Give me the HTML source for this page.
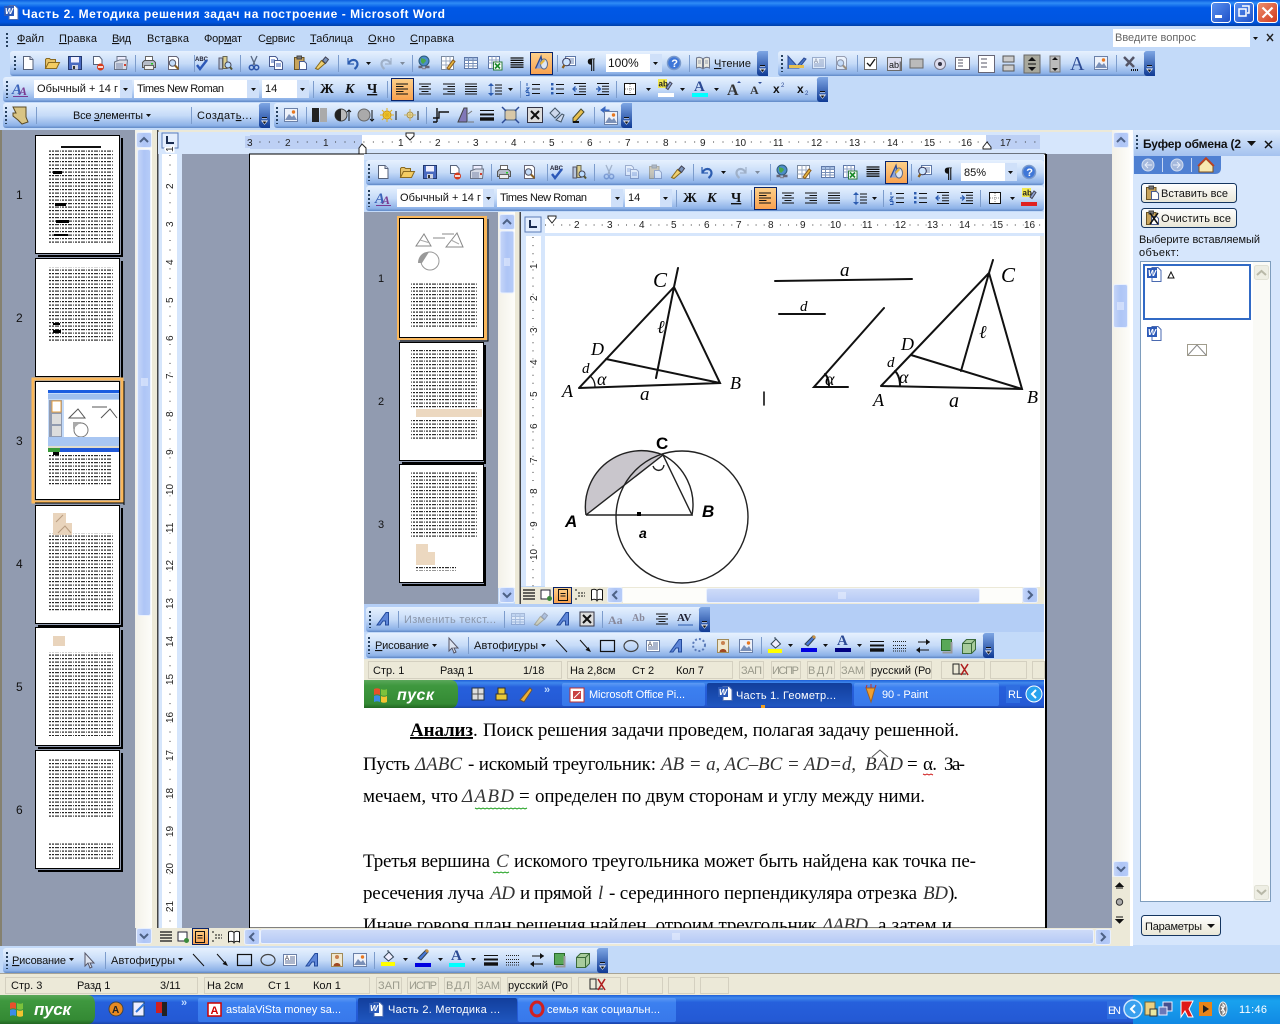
<!DOCTYPE html>
<html lang="ru"><head><meta charset="utf-8"><title>Часть 2. Методика решения задач на построение - Microsoft Word</title>
<style>
html,body{margin:0;padding:0;background:#c3daf9;overflow:hidden}
svg{display:block;position:absolute;left:0;top:0}
text{font-family:"Liberation Sans","DejaVu Sans",sans-serif;font-size:11px;fill:#111}
.t{font-family:"Liberation Serif","DejaVu Serif",serif;font-size:19px;fill:#000}
.i{font-family:"Liberation Serif",serif;font-size:19px;font-style:italic;fill:#333}
.r{font-size:10px;fill:#222}
.w{fill:#fff}.g{fill:#9a9a8c}.b{font-weight:bold}
.h{font-family:"Liberation Serif",serif;font-style:italic;font-size:18px;fill:#000}
.d{font-family:"Liberation Sans",sans-serif;font-weight:bold;font-size:17px;fill:#000}
</style></head><body>
<svg width="1280" height="1024" viewBox="0 0 1280 1024" xmlns="http://www.w3.org/2000/svg">
<defs>
<linearGradient id="title" x1="0" y1="0" x2="0" y2="1"><stop offset="0" stop-color="#0a5de0"/><stop offset=".12" stop-color="#2f8cf5"/><stop offset=".3" stop-color="#0058e6"/><stop offset=".85" stop-color="#0055e0"/><stop offset="1" stop-color="#0040a8"/></linearGradient>
<linearGradient id="tb" x1="0" y1="0" x2="0" y2="1"><stop offset="0" stop-color="#e6f1fe"/><stop offset=".5" stop-color="#c6dbf8"/><stop offset=".9" stop-color="#8db2e8"/><stop offset="1" stop-color="#5f87c5"/></linearGradient>
<linearGradient id="chev" x1="0" y1="0" x2="0" y2="1"><stop offset="0" stop-color="#7ea6e4"/><stop offset="1" stop-color="#0f3a94"/></linearGradient>
<linearGradient id="sel" x1="0" y1="0" x2="0" y2="1"><stop offset="0" stop-color="#fdd08a"/><stop offset="1" stop-color="#f8a04e"/></linearGradient>
<linearGradient id="tbar" x1="0" y1="0" x2="0" y2="1"><stop offset="0" stop-color="#1f5fd8"/><stop offset=".1" stop-color="#3f88ec"/><stop offset=".25" stop-color="#2660dc"/><stop offset=".9" stop-color="#2459d4"/><stop offset="1" stop-color="#1a44a8"/></linearGradient>
<linearGradient id="tbtn" x1="0" y1="0" x2="0" y2="1"><stop offset="0" stop-color="#5c9af5"/><stop offset=".2" stop-color="#3c80f0"/><stop offset="1" stop-color="#3878ea"/></linearGradient>
<linearGradient id="tact" x1="0" y1="0" x2="0" y2="1"><stop offset="0" stop-color="#123e9c"/><stop offset="1" stop-color="#1f56bf"/></linearGradient>
<linearGradient id="tray" x1="0" y1="0" x2="0" y2="1"><stop offset="0" stop-color="#0f7fdc"/><stop offset=".2" stop-color="#19a2ee"/><stop offset="1" stop-color="#1189e4"/></linearGradient>
<linearGradient id="start" x1="0" y1="0" x2="0" y2="1"><stop offset="0" stop-color="#5aa75a"/><stop offset=".2" stop-color="#3f983f"/><stop offset=".85" stop-color="#348a34"/><stop offset="1" stop-color="#226622"/></linearGradient>
<linearGradient id="sb" x1="0" y1="0" x2="1" y2="0"><stop offset="0" stop-color="#c6d6f8"/><stop offset=".5" stop-color="#aec5f6"/><stop offset="1" stop-color="#b6ccf8"/></linearGradient>
<linearGradient id="sbh" x1="0" y1="0" x2="0" y2="1"><stop offset="0" stop-color="#cfdcf8"/><stop offset="1" stop-color="#b4c9f6"/></linearGradient>
<linearGradient id="track" x1="0" y1="0" x2="1" y2="0"><stop offset="0" stop-color="#f3f1e8"/><stop offset="1" stop-color="#fdfdfa"/></linearGradient>
<linearGradient id="pane" x1="0" y1="0" x2="0" y2="1"><stop offset="0" stop-color="#dfecfd"/><stop offset="1" stop-color="#a4c2ef"/></linearGradient>
<linearGradient id="btn" x1="0" y1="0" x2="0" y2="1"><stop offset="0" stop-color="#fff"/><stop offset="1" stop-color="#e8e6d6"/></linearGradient>
<linearGradient id="wb" x1="0" y1="0" x2="1" y2="1"><stop offset="0" stop-color="#5b92f0"/><stop offset="1" stop-color="#1d50c8"/></linearGradient>
<linearGradient id="wr" x1="0" y1="0" x2="1" y2="1"><stop offset="0" stop-color="#ee9170"/><stop offset="1" stop-color="#d0381c"/></linearGradient>
<pattern id="txt" width="13" height="3.5" patternUnits="userSpaceOnUse"><rect width="2" height="1.200" fill="#222"/><rect x="3" width="4" height="1.200" fill="#333"/><rect x="8" width="1" height="1.200" fill="#444"/><rect x="10" width="2" height="1.200" fill="#222"/></pattern>

<g id="new"><path d="M3.5 1.5h6.5l3 3v10h-9.500z" fill="#fff" stroke="#56627a"/><path d="M10 1.500v3h3" fill="#dde" stroke="#56627a"/></g>
<g id="open"><path d="M1.500 13.500v-9l1-1h3l1 1h5v3" fill="#e8c468" stroke="#8a6a20"/><path d="M1.500 13.500l3-6h11l-3 6z" fill="#f4cc62" stroke="#8a6a20"/></g>
<g id="save"><rect x="1.500" y="1.500" width="13" height="13" fill="#4a6ac0" stroke="#23386f"/><rect x="4" y="2" width="8" height="5.500" fill="#f0f0ff"/><rect x="5" y="10" width="6" height="4.500" fill="#d0d4e4"/><rect x="6" y="11" width="2" height="3" fill="#333"/></g>
<g id="perm"><path d="M3.500 1.500h6l2.500 3v5h-8.500z" fill="#fff" stroke="#56627a"/><circle cx="10.500" cy="12" r="3.500" fill="#d43a1c"/><rect x="8" y="11.200" width="5" height="1.600" fill="#fff"/></g>
<g id="mail"><path d="M4 1.500h9v6H4z" fill="#eef" stroke="#6a7488"/><path d="M1.500 7l5-2h8l-1 9.500H1.500z" fill="#d8dde8" stroke="#6a7488"/><path d="M3 9h7M3 11h7M3 13h7" stroke="#7a88a8"/><rect x="11" y="9" width="2" height="2" fill="#d04030"/></g>
<g id="print"><path d="M4.500 1.500h7v5h-7z" fill="#fff" stroke="#666"/><path d="M1.500 7.500l2-2h9l2 2v5h-13z" fill="#b6bcc8" stroke="#555"/><path d="M3.500 10.500h9v4h-9z" fill="#eee" stroke="#666"/><rect x="10" y="8" width="2" height="1.500" fill="#2c2"/></g>
<g id="prev"><path d="M3.500 1.500h8l2 2v11h-10z" fill="#fff" stroke="#667"/><circle cx="7.500" cy="8" r="3.200" fill="#c4dcf8" stroke="#556"/><path d="M10 10.500l3.500 3.500" stroke="#8a6020" stroke-width="2"/></g>
<g id="spell"><text x="1" y="6" style="font-size:6px;font-weight:bold;fill:#223">ABC</text><path d="M3 10l3 4 7-9" fill="none" stroke="#2c58b8" stroke-width="2.400"/></g>
<g id="res"><rect x="2" y="3" width="3.500" height="11" fill="#b6c4dc" stroke="#556"/><rect x="6" y="1.500" width="4" height="12" fill="#dccf90" stroke="#665"/><circle cx="11" cy="10" r="3" fill="#bcdcff" stroke="#445"/><path d="M13 12l2 2.500" stroke="#553" stroke-width="2"/></g>
<g id="cut"><path d="M5 1l4 9M11 1L7 10" stroke="#5a6a84" stroke-width="1.300" fill="none"/><circle cx="5.500" cy="12.500" r="2.200" fill="none" stroke="#2c54a8" stroke-width="1.500"/><circle cx="10.500" cy="12.500" r="2.200" fill="none" stroke="#2c54a8" stroke-width="1.500"/></g>
<g id="copy"><path d="M1.500 1.500h6l2 2v8h-8z" fill="#fff" stroke="#4a5c90"/><path d="M6.500 5.500h6l2 2v7h-8z" fill="#fff" stroke="#4a5c90"/><path d="M8 9h5M8 11h5M3 5h4M3 7h3" stroke="#3f63b8"/></g>
<g id="paste"><rect x="2.500" y="2.500" width="9.500" height="12" fill="#c8a45c" stroke="#6a5424"/><rect x="5" y="1" width="4.500" height="3" fill="#777" stroke="#444"/><path d="M7.500 6.500h5l2 2v6h-7z" fill="#fff" stroke="#4a5c90"/></g>
<g id="brush"><path d="M1.500 13.500l6-8 3.500 3-7 6z" fill="#f0d070" stroke="#86691c"/><path d="M8.500 5.500l3-3.500 3 2.500-3 4z" fill="#7a92b8" stroke="#445"/></g>
<g id="undo"><path d="M3 3v6h6" fill="none" stroke="#2c5cb0" stroke-width="1.200"/><path d="M3.500 8.500c2-5 9-4.500 9 .5 0 2-1 3.500-3 5" fill="none" stroke="#2c5cb0" stroke-width="2.200"/></g>
<g id="redo"><path d="M13 3v6H7" fill="none" stroke="#9fb0c8" stroke-width="1.200"/><path d="M12.500 8.500c-2-5-9-4.500-9 .5 0 2 1 3.500 3 5" fill="none" stroke="#9fb0c8" stroke-width="2.200"/></g>
<g id="link"><circle cx="8" cy="6" r="5" fill="#4c8cc8" stroke="#2c5a7c"/><path d="M5 3c2 1 4 0 5 3l-3 3-2-2z" fill="#4aa84a"/><path d="M2.500 12h4M9 12h4.500" stroke="#667" stroke-width="2.500"/><path d="M6 13.500h4" stroke="#889" stroke-width="1.500"/></g>
<g id="tbl"><rect x="1.500" y="1.500" width="12" height="13" fill="#fff" stroke="#7a8aa0"/><path d="M1.500 6h12M1.500 10h12M6 1.500v13M10 1.500v13" stroke="#9aa8c0"/><path d="M7 13l6-8 2 1.500-6 8z" fill="#e8b840" stroke="#8a5a1c"/></g>
<g id="grid"><rect x="1.500" y="2.500" width="13" height="11" fill="#fff" stroke="#5e78a8"/><rect x="2" y="3" width="12" height="2" fill="#a8c0e4"/><path d="M1.500 5.500h13M1.500 8.500h13M1.500 11h13M5.500 2.500v11M10 2.500v11" stroke="#7890b8"/></g>
<g id="xl"><rect x="1.500" y="1.500" width="11" height="12" fill="#fff" stroke="#5e78a8"/><path d="M1.500 5h11M1.500 8h11M5 1.500v12M9 1.500v12" stroke="#8ea2c4"/><rect x="6.500" y="7" width="8.500" height="8" fill="#fff" stroke="#2a7a3a"/><path d="M8 8.500l5 5M13 8.500l-5 5" stroke="#1a8a2a" stroke-width="1.700"/></g>
<g id="cols"><path d="M1.500 3h5.500M9 3h5.500M1.500 5.300h5.500M9 5.300h5.500M1.500 7.600h5.500M9 7.600h5.500M1.500 9.900h5.500M9 9.900h5.500M1.500 12.200h5.500M9 12.200h5.500" stroke="#111" stroke-width="1.300"/><path d="M7 3h2M7 5.300h2M7 7.600h2M7 9.900h2M7 12.200h2" stroke="#111" stroke-width="1.300"/></g>
<g id="draw"><path d="M2.500 13.500L8 1.500l2.500 12" fill="#8ca4d8" stroke="#2c4a94" stroke-width="1.300"/><ellipse cx="11" cy="9" rx="3.500" ry="5" fill="#dde6f4" stroke="#5c6a8a"/><path d="M7 8l4-4 1 2-4 4z" fill="#e8b840"/></g>
<g id="dmap"><rect x="4.500" y="1.500" width="10" height="9" fill="#fff" stroke="#5e78a8"/><path d="M6 4h7M6 6h7M6 8h7" stroke="#6a84b4"/><circle cx="5.500" cy="7" r="3.800" fill="#cce4ff" stroke="#335"/><path d="M3.500 10l-2 3" stroke="#8a6020" stroke-width="2.200"/></g>
<g id="help"><circle cx="8" cy="8" r="6.500" fill="#3f77d8" stroke="#7a9acc" stroke-width="1.500"/><text x="5.200" y="12" style="font-size:11px;font-weight:bold;fill:#fff">?</text></g>
<g id="book"><path d="M1.500 3c2-1 4-1 6 .5v10c-2-1.500-4-1.500-6-.5zM14.500 3c-2-1-4-1-6 .5v10c2-1.500 4-1.500 6-.5z" fill="#e8e8e0" stroke="#70788c"/><path d="M3 6h3M3 8h3M10 6h3M10 8h3" stroke="#98a0b0"/></g>
<g id="sty"><text x="-1" y="13" style="font-family:'Liberation Serif',serif;font-size:15px;font-weight:bold;font-style:italic;fill:#3a62b8">A</text><text x="6" y="14" style="font-family:'Liberation Serif',serif;font-size:12px;font-weight:bold;font-style:italic;fill:#7a3a90">A</text><path d="M0 15.500h15" stroke="#7a3a90"/></g>
<g id="al"><path d="M2 3h12M2 5.500h7.500M2 8h12M2 10.500h7.500M2 13h12" stroke="#111"/></g>
<g id="ac"><path d="M2 3h12M4.500 5.500h7M2 8h12M4.500 10.500h7M2 13h12" stroke="#111"/></g>
<g id="ar"><path d="M2 3h12M6.500 5.500h7.500M2 8h12M6.500 10.500h7.500M2 13h12" stroke="#111"/></g>
<g id="aj"><path d="M2 3h12M2 5.500h12M2 8h12M2 10.500h12M2 13h12" stroke="#111"/></g>
<g id="ls"><path d="M8 4h7M8 7h7M8 10h7M8 13h7" stroke="#111"/><path d="M4 2l-3 3h6zM4 15l-3-3h6z" fill="#2c5cb0"/><path d="M4 4v9" stroke="#2c5cb0"/></g>
<g id="num"><path d="M7 3.500h8M7 8h8M7 12.500h8" stroke="#111"/><path d="M2 2v3M1 7h3L1 10h3M1 11.500h3v3H1" stroke="#2c5cb0" fill="none"/></g>
<g id="bul"><path d="M7 3.500h8M7 8h8M7 12.500h8" stroke="#111"/><rect x="2" y="2" width="2.500" height="2.500" fill="#2c5cb0"/><rect x="2" y="6.500" width="2.500" height="2.500" fill="#2c5cb0"/><rect x="2" y="11" width="2.500" height="2.500" fill="#2c5cb0"/></g>
<g id="out"><path d="M2 2.500h12M7 5.300h7M7 8h7M7 10.700h7M2 13.500h12" stroke="#111"/><path d="M5 8H1M3.500 5.500L1 8l2.500 2.500" stroke="#2c5cb0" fill="none" stroke-width="1.300"/></g>
<g id="ind"><path d="M2 2.500h12M7 5.300h7M7 8h7M7 10.700h7M2 13.500h12" stroke="#111"/><path d="M1 8h4M3 5.500L5.500 8 3 10.500" stroke="#2c5cb0" fill="none" stroke-width="1.300"/></g>
<g id="bord"><rect x="2.500" y="2.500" width="11" height="11" fill="#fff" stroke="#111"/><path d="M8 3v10M3 8h10" stroke="#888" stroke-dasharray="1 1"/></g>
<g id="hl"><rect x="1" y="0" width="9" height="9" fill="#f2e850"/><text x="1.500" y="7.500" style="font-size:8px;font-weight:bold;fill:#222">ab</text><path d="M9 9l4-6 2 1.500-4 6z" fill="#8ca4d8" stroke="#445"/></g>
<g id="fc"><text x="2" y="12" style="font-family:'Liberation Serif',serif;font-size:15px;font-weight:bold;fill:#2c4a94">A</text></g>
<g id="arr"><path d="M0 0h5L2.500 3z" fill="#111"/></g>
<g id="cv"><path d="M0 4a3 3 0 0 1 3-4h8v25H3a3 3 0 0 1-3-3z" fill="url(#chev)"/><path d="M3 15h5M3 18h5L5.500 21z" stroke="#fff" fill="#fff"/><path d="M3 14.500h5" stroke="#111"/><path d="M3.500 18.500h4L5.500 21z" fill="#111" stroke="none"/></g>
<g id="line"><path d="M3 2l11 12" stroke="#111"/></g>
<g id="larr"><path d="M3 2l8 9" stroke="#111"/><path d="M14 14l-5.500-2 3-3z" fill="#111"/></g>
<g id="rec"><rect x=".5" y="2.500" width="14" height="11" fill="none" stroke="#111" stroke-width="1.200"/></g>
<g id="ell"><ellipse cx="8" cy="8" rx="7" ry="5.500" fill="none" stroke="#444" stroke-width="1.200"/></g>
<g id="tx"><rect x="1.500" y="2.500" width="13" height="11" fill="#fff" stroke="#6a80a8"/><text x="3" y="8" style="font-size:6px;fill:#223">A</text><path d="M8 5h5M8 7h5M3 9h10M3 11h10" stroke="#5a6e98"/></g>
<g id="wa"><path d="M1 14L10 1.500h2.500V14h-3V10H7l-3 4z" fill="#5e86d8" stroke="#234a9c"/></g>
<g id="clip"><rect x="2.500" y="1.500" width="11" height="13" fill="#f0e8d0" stroke="#a08a58"/><circle cx="8" cy="5" r="2" fill="#c88050"/><path d="M4.500 14c0-4 7-4 7 0z" fill="#a04820"/></g>
<g id="pic"><rect x="1.500" y="1.500" width="13" height="13" fill="#eef2fa" stroke="#6a80a8"/><path d="M2 13l4-6 3 3 2-2 3 5z" fill="#7a90b8"/><circle cx="10.500" cy="5" r="1.700" fill="#e87820"/></g>
<g id="fill"><path d="M3 7l5-5 4.500 5-5 4z" fill="#eef" stroke="#345"/><path d="M7 2v-2" stroke="#345"/><rect x="0" y="12" width="14" height="4"/></g>
<g id="lc"><path d="M3 9l8-8 2 2-7 8z" fill="#4878d8" stroke="#345"/><path d="M10 2l2-2 2 2-2 2z" fill="#c89040"/></g>
<g id="lw"><path d="M1 3.500h14" stroke="#111"/><path d="M1 7.500h14" stroke="#111" stroke-width="2"/><path d="M1 12h14" stroke="#111" stroke-width="3.400"/></g>
<g id="das"><path d="M1 3.500h14M1 7.500h14M1 10.500h14M1 13h14" stroke="#222" stroke-dasharray="1 1"/></g>
<g id="ars"><path d="M3 4h12M2 12h12" stroke="#111"/><path d="M1 12l4-3v6zM15 4l-4-3v6zM1 8h14" fill="#111"/></g>
<g id="sha"><rect x="3.500" y="1.500" width="10" height="11" fill="#58a858" stroke="#2a6a2a"/><path d="M13.500 4v10.500h-9" stroke="#999" stroke-width="2" fill="none"/></g>
<g id="d3"><path d="M1.500 5.500l4-4h9v10l-4 4h-9z" fill="#a8cc9c" stroke="#3a6a3a"/><path d="M1.500 5.500h9v10M10.500 5.500l4-4" fill="none" stroke="#3a6a3a"/></g>
<g id="uarr"><rect x=".5" y=".5" width="15" height="15" rx="2" fill="url(#sb)" stroke="#e8f0fe"/><path d="M4 10l4-4 4 4" fill="none" stroke="#4d6185" stroke-width="2"/></g>
<g id="darr"><rect x=".5" y=".5" width="15" height="15" rx="2" fill="url(#sb)" stroke="#e8f0fe"/><path d="M4 6l4 4 4-4" fill="none" stroke="#4d6185" stroke-width="2"/></g>
<g id="larr2"><rect x=".5" y=".5" width="15" height="15" rx="2" fill="url(#sb)" stroke="#e8f0fe"/><path d="M10 4L6 8l4 4" fill="none" stroke="#4d6185" stroke-width="2"/></g>
<g id="rarr2"><rect x=".5" y=".5" width="15" height="15" rx="2" fill="url(#sb)" stroke="#e8f0fe"/><path d="M6 4l4 4-4 4" fill="none" stroke="#4d6185" stroke-width="2"/></g>
<g id="wd"><path d="M6 1.500h6l3 3v11H6z" fill="#fff" stroke="#4a6ab0"/><rect x="1" y="2" width="10" height="10" fill="#2c5ab8"/><text x="2" y="10" style="font-size:8.500px;font-weight:bold;font-style:italic;fill:#fff">W</text></g>
<g id="flag"><path d="M1 3c2-1 4-1 6 0v6c-2-1-4-1-6 0z" fill="#e8502c"/><path d="M8 3c2 1 4 1 6 0v6c-2 1-4 1-6 0z" fill="#7cc23c"/><path d="M1 10c2-1 4-1 6 0v6c-2-1-4-1-6 0z" fill="#3c8ce8"/><path d="M8 10c2 1 4 1 6 0v6c-2 1-4 1-6 0z" fill="#f4c430"/></g>
<g id="vn"><path d="M2 3h12M2 6h12M2 9h12M2 12h12" stroke="#111" stroke-width="1.200"/></g>
<g id="vw"><rect x="3" y="3" width="9" height="9" fill="#fff" stroke="#223"/><circle cx="11.500" cy="11.500" r="2.500" fill="#3a8a3a"/></g>
<g id="vp"><rect x="3.500" y="2.500" width="9" height="11" fill="none" stroke="#111"/><path d="M5.500 6.500h5M5.500 9h5" stroke="#111"/></g>
<g id="vo"><path d="M3 3h3M6 6h7M6 9h7M3 12h3" stroke="#111" stroke-dasharray="2 1"/></g>
<g id="vr"><path d="M2.500 3c2-1 4-1 5.500 .5v10c-1.500-1.500-3.500-1.500-5.500-.5zM13.500 3c-2-1-4-1-5.500 .5v10c1.500-1.500 3.500-1.500 5.500-.5z" fill="#fff" stroke="#111"/></g>
</defs>

<!-- base -->
<rect width="1280" height="1024" fill="#c3daf9"/>
<!-- title bar -->
<rect width="1280" height="26" fill="url(#title)"/>
<use href="#wd" x="3" y="4"/>
<text x="22" y="18" class="w b" style="font-size:12px" textLength="423" lengthAdjust="spacing">Часть 2. Методика решения задач на построение - Microsoft Word</text>
<rect x="1211.500" y="2.500" width="19" height="20" rx="3" fill="url(#wb)" stroke="#fff"/><rect x="1215" y="15" width="7" height="3" fill="#fff"/>
<rect x="1234.500" y="2.500" width="19" height="20" rx="3" fill="url(#wb)" stroke="#fff"/><path d="M1242 6h7v7h-2M1239 9h7v7h-7z" fill="none" stroke="#fff" stroke-width="1.500"/>
<rect x="1257.500" y="2.500" width="20" height="20" rx="3" fill="url(#wr)" stroke="#fff"/><path d="M1262.500 7.500l10 10M1272.500 7.500l-10 10" stroke="#fff" stroke-width="2.200"/>

<!-- menu bar -->
<path d="M7 33v15" stroke="#27415e" stroke-width="2" stroke-dasharray="2 2"/>
<g>
<text x="17" y="42" textLength="27"><tspan text-decoration="underline">Ф</tspan>айл</text>
<text x="59" y="42" textLength="38"><tspan text-decoration="underline">П</tspan>равка</text>
<text x="112" y="42" textLength="19"><tspan text-decoration="underline">В</tspan>ид</text>
<text x="147" y="42" textLength="42">Вст<tspan text-decoration="underline">а</tspan>вка</text>
<text x="204" y="42" textLength="38">Фор<tspan text-decoration="underline">м</tspan>ат</text>
<text x="258" y="42" textLength="37">С<tspan text-decoration="underline">е</tspan>рвис</text>
<text x="310" y="42" textLength="43"><tspan text-decoration="underline">Т</tspan>аблица</text>
<text x="368" y="42" textLength="27"><tspan text-decoration="underline">О</tspan>кно</text>
<text x="410" y="42" textLength="44"><tspan text-decoration="underline">С</tspan>правка</text>
</g>
<rect x="1113" y="29" width="148" height="18" fill="#fff"/><rect x="1250" y="29" width="11" height="18" fill="#c3daf9"/>
<text x="1115" y="41" style="fill:#666" textLength="81">Введите вопрос</text><use href="#arr" x="1253" y="37"/>
<path d="M1267 34l6 7M1273 34l-6 7" stroke="#222" stroke-width="1.400"/>

<!-- Row 1 toolbar -->
<rect x="10" y="51" width="758" height="25" rx="3" fill="url(#tb)"/><use href="#cv" x="757" y="51"/>
<path d="M15 56v16" stroke="#27415e" stroke-width="2" stroke-dasharray="2 2"/>
<rect x="530.500" y="52.500" width="22" height="22" fill="url(#sel)" stroke="#0a246a"/>
<use href="#new" x="20" y="55"/><use href="#open" x="44" y="55"/><use href="#save" x="67" y="55"/><use href="#perm" x="90" y="55"/><use href="#mail" x="113" y="55"/>
<path d="M135.500 55v17M194.500 55v17M240.500 55v17M338.500 55v17M412.500 55v17M557.500 55v17M689.500 55v17" stroke="#7c9ccc"/>
<use href="#print" x="141" y="55"/><use href="#prev" x="165" y="55"/><use href="#spell" x="194" y="55"/><use href="#res" x="217" y="55"/><use href="#cut" x="246" y="55"/><use href="#copy" x="268" y="55"/><use href="#paste" x="292" y="55"/><use href="#brush" x="314" y="55"/><use href="#undo" x="345" y="55"/><use href="#arr" x="366" y="62"/><use href="#redo" x="378" y="55"/><use href="#arr" x="400" y="62" opacity=".4"/><use href="#link" x="416" y="55"/><use href="#tbl" x="440" y="55"/><use href="#grid" x="463" y="55"/><use href="#xl" x="487" y="55"/><use href="#cols" x="509" y="55"/><use href="#draw" x="533" y="55"/><use href="#dmap" x="561" y="55"/>
<text x="587" y="69" style="font-family:'Liberation Serif',serif;font-size:16px;font-weight:bold;fill:#111">¶</text>
<rect x="606" y="54" width="56" height="18" fill="#fff"/><rect x="650" y="54" width="12" height="18" fill="#cfe0f9"/><text x="608" y="67" style="font-size:12px">100%</text><use href="#arr" x="653" y="62"/>
<use href="#help" x="666" y="55"/><use href="#book" x="695" y="55"/>
<text x="714" y="67" textLength="37"><tspan text-decoration="underline">Ч</tspan>тение</text>

<rect x="778" y="51" width="377" height="25" rx="3" fill="url(#tb)"/><use href="#cv" x="1144" y="51"/>
<path d="M782 55v17" stroke="#27415e" stroke-width="2" stroke-dasharray="2 2"/>
<path d="M788 69V56l9 10 7-8 2 1-7 9h-11z" fill="#4a78c8" stroke="#2c4a94"/><rect x="789" y="65" width="15" height="3" fill="#e8c050"/>
<g opacity=".55"><use href="#tx" x="811" y="55"/><use href="#prev" x="833" y="55"/></g>
<path d="M857.500 55v17M1116.500 55v17" stroke="#7c9ccc"/>
<rect x="864.500" y="57.500" width="12" height="12" fill="#fff" stroke="#6a6a6a"/><path d="M867 63l3 3 5-7" fill="none" stroke="#111" stroke-width="1.300"/>
<rect x="887.500" y="57.500" width="14" height="13" fill="#dde" stroke="#6a6a6a"/><text x="889" y="68" style="font-size:9px">ab|</text>
<rect x="910" y="59" width="13" height="9" fill="#bbb" stroke="#666"/>
<circle cx="940" cy="64" r="5.500" fill="#dde" stroke="#778"/><circle cx="940" cy="64" r="2" fill="#334"/>
<rect x="955.500" y="57.500" width="14" height="12" fill="#fff" stroke="#667"/><path d="M958 60h5M958 63h5M958 66h5" stroke="#556"/>
<rect x="978.500" y="55.500" width="16" height="17" fill="#fff" stroke="#667"/><path d="M981 59h6M981 63h6M981 67h6" stroke="#556"/>
<rect x="1003" y="56" width="11" height="6" fill="#ccc" stroke="#555"/><rect x="1003" y="65" width="11" height="6" fill="#ccc" stroke="#555"/>
<rect x="1024" y="55" width="16" height="18" fill="#a8a89c" stroke="#666"/><path d="M1032 57l-4 4h8zM1032 71l-4-4h8z" fill="#111"/><path d="M1028 64h8" stroke="#111"/>
<rect x="1050" y="56" width="10" height="16" fill="#bbb" stroke="#777"/><path d="M1055 57l-3 3h6zM1055 71l-3-3h6z" fill="#111"/>
<text x="1070" y="70" style="font-family:'Liberation Serif',serif;font-size:20px;fill:#2c4a94">A</text><use href="#pic" x="1093" y="55"/>
<path d="M1124 57l10 10M1134 57l-8 9" stroke="#556" stroke-width="2.500"/><path d="M1131 70h7" stroke="#111" stroke-dasharray="1 1" stroke-width="2"/>

<!-- Row 2 toolbar -->
<rect x="3" y="77" width="825" height="25" rx="3" fill="url(#tb)"/><use href="#cv" x="817" y="77"/>
<path d="M7 81v17" stroke="#27415e" stroke-width="2" stroke-dasharray="2 2"/>
<use href="#sty" x="13" y="81"/>
<rect x="34" y="80" width="98" height="18" fill="#fff"/><rect x="120" y="80" width="12" height="18" fill="#cfe0f9"/><text x="37" y="92" textLength="81">Обычный + 14 г</text><use href="#arr" x="123" y="88"/>
<rect x="134" y="80" width="125" height="18" fill="#fff"/><rect x="247" y="80" width="12" height="18" fill="#cfe0f9"/><text x="137" y="92" textLength="87">Times New Roman</text><use href="#arr" x="251" y="88"/>
<rect x="262" y="80" width="47" height="18" fill="#fff"/><rect x="297" y="80" width="12" height="18" fill="#cfe0f9"/><text x="265" y="92">14</text><use href="#arr" x="300" y="88"/>
<path d="M313.500 81v17M387.500 81v17M520.500 81v17M616.500 81v17" stroke="#7c9ccc"/>
<text x="320" y="93" style="font-family:'Liberation Serif',serif;font-size:14px;font-weight:bold">Ж</text>
<text x="345" y="93" style="font-family:'Liberation Serif',serif;font-size:14px;font-weight:bold;font-style:italic">К</text>
<text x="367" y="93" style="font-family:'Liberation Serif',serif;font-size:14px;font-weight:bold;text-decoration:underline">Ч</text>
<rect x="391.500" y="78.500" width="22" height="22" fill="url(#sel)" stroke="#0a246a"/>
<use href="#al" x="394" y="81"/><use href="#ac" x="417" y="81"/><use href="#ar" x="441" y="81"/><use href="#aj" x="463" y="81"/><use href="#ls" x="487" y="81"/><use href="#arr" x="508" y="88"/><use href="#num" x="525" y="81"/><use href="#bul" x="549" y="81"/><use href="#out" x="572" y="81"/><use href="#ind" x="595" y="81"/><use href="#bord" x="622" y="81"/><use href="#arr" x="646" y="88"/>
<use href="#hl" x="657" y="79"/><rect x="658" y="93" width="16" height="4" fill="#fff"/><use href="#arr" x="680" y="88"/>
<use href="#fc" x="692" y="79"/><rect x="692" y="93" width="16" height="4" fill="#00ffff"/><use href="#arr" x="714" y="88"/>
<text x="727" y="95" style="font-family:'Liberation Serif',serif;font-size:16px;font-weight:bold;fill:#333">A</text><path d="M737 83l2-2 2 2z" fill="#2c4a94"/>
<text x="750" y="94" style="font-family:'Liberation Serif',serif;font-size:12px;font-weight:bold;fill:#333">A</text><path d="M758 82l2 2 2-2z" fill="#2c4a94"/>
<text x="773" y="93" style="font-size:12px;font-weight:bold">x</text><text x="781" y="87" style="font-size:6px;fill:#2c4a94">2</text>
<text x="797" y="93" style="font-size:12px;font-weight:bold">x</text><text x="805" y="95" style="font-size:6px;fill:#2c4a94">2</text>

<!-- Row 3 -->
<rect x="3" y="103" width="266" height="25" rx="3" fill="url(#tb)"/><use href="#cv" x="259" y="103"/>
<path d="M6 107v17" stroke="#27415e" stroke-width="2" stroke-dasharray="2 2"/>
<path d="M13 107h13v10l2 5-6 2-4-4-5-4v-3h3z" fill="#d8c484" stroke="#5a4a24"/>
<path d="M36.500 107v17M191.500 107v17" stroke="#7c9ccc"/>
<text x="73" y="119" textLength="70">Все <tspan text-decoration="underline">э</tspan>лементы</text><use href="#arr" x="146" y="114"/>
<text x="197" y="119" textLength="55">Создат<tspan text-decoration="underline">ь</tspan>...</text>
<rect x="274" y="103" width="358" height="25" rx="3" fill="url(#tb)"/><use href="#cv" x="621" y="103"/>
<path d="M277 107v17" stroke="#27415e" stroke-width="2" stroke-dasharray="2 2"/>
<use href="#pic" x="283" y="107"/><path d="M306.500 107v17M426.500 107v17M594.500 107v17" stroke="#7c9ccc"/>
<rect x="312" y="108" width="7" height="14" fill="#222"/><rect x="320" y="108" width="7" height="14" fill="#aaa"/>
<circle cx="341" cy="115" r="6" fill="#bbb" stroke="#444"/><path d="M341 109a6 6 0 0 0 0 12z" fill="#222"/><path d="M349 121v-11M347 112l2-2 2 2" stroke="#111" fill="none"/>
<circle cx="364" cy="115" r="6" fill="#aaa" stroke="#666"/><path d="M372 110v11M370 119l2 2 2-2" stroke="#111" fill="none"/>
<circle cx="387" cy="115" r="4" fill="#f4d030" stroke="#c8901c"/><path d="M380 115h14M387 108v14M382 110l10 10M392 110l-10 10" stroke="#e0b020"/><path d="M396 120v-9" stroke="#111"/>
<circle cx="410" cy="115" r="3" fill="#f0e0a0" stroke="#a89050"/><path d="M404 115h12M410 109v12" stroke="#c8b060"/><path d="M418 111v9" stroke="#111"/>
<path d="M433 118h6v-6h4M437 108v14M433 122h4M443 112h6" stroke="#111" stroke-width="1.400" fill="none"/>
<path d="M458 122l6-14h3v14z" fill="#8078b8" stroke="#444"/><path d="M468 114l4-3M468 122h6" stroke="#777"/>
<use href="#lw" x="479" y="107"/>
<rect x="505" y="110" width="11" height="10" fill="#d8c8a8" stroke="#567"/><path d="M502 107l4 4M519 107l-4 4M502 123l4-4M519 123l-4-4" stroke="#2c4a94" stroke-width="1.500"/>
<rect x="527.500" y="107.500" width="15" height="15" fill="#ddd" stroke="#334"/><path d="M531 111l8 8M539 111l-8 8" stroke="#111" stroke-width="2"/>
<path d="M550 113l5-5 5 5-5 5zM556 120l6-6 2 1-3 7z" fill="#cdd8ec" stroke="#456"/>
<path d="M573 122v-4l8-9 3 3-8 9z" fill="#e8c050" stroke="#4a4a2a"/><path d="M573 122h6" stroke="#111" stroke-width="2"/>
<path d="M601 110l4-3v6zM605 110h4v6" fill="#3a68c0" stroke="#3a68c0"/><use href="#pic" x="603" y="110" transform="translate(0 0)"/>

<!-- workspace -->
<rect x="0" y="130" width="1133" height="816" fill="#ece9d8"/>
<rect x="2" y="130" width="134" height="816" fill="#919bb0"/>
<rect x="0" y="130" width="2" height="816" fill="#85816f"/>
<rect x="135" y="130" width="17" height="798" fill="url(#track)"/>
<rect x="152" y="130" width="5" height="798" fill="#ece9d8"/><rect x="157" y="130" width="1.500" height="798" fill="#444"/>
<use href="#uarr" x="136" y="132"/>
<rect x="137.500" y="149.500" width="13" height="466" rx="2" fill="url(#sb)" stroke="#eaf1fe"/>
<path d="M141 379h7M141 381h7M141 383h7M141 385h7" stroke="#eef3ff"/>
<use href="#darr" x="136" y="928"/>

<!-- thumbnails main -->
<g stroke="#000">
<rect x="35.500" y="135.500" width="84" height="118" fill="#fff"/>
<rect x="35.500" y="258.500" width="84" height="118" fill="#fff"/>
<rect x="35.500" y="505.500" width="84" height="118" fill="#fff"/>
<rect x="35.500" y="627.500" width="84" height="118" fill="#fff"/>
<rect x="35.500" y="750.500" width="84" height="118" fill="#fff"/>
</g>
<path d="M122 138v118H38M122 261v118H38M122 508v118H38M122 630v118H38M122 753v118H38" stroke="#000" stroke-width="2" fill="none"/>
<rect x="33" y="379" width="89" height="123" fill="none" stroke="#fab85c" stroke-width="3"/>
<path d="M124 381v124" stroke="#000" stroke-width="1"/><path d="M35 503h89" stroke="#000" stroke-width="1"/>
<rect x="35.500" y="381.500" width="84" height="118" fill="#fff" stroke="#000"/>
<g fill="url(#txt)">
<rect x="61" y="146" width="40" height="2" fill="#111"/>
<rect x="48" y="150" width="65" height="94"/>
<rect x="48" y="267" width="65" height="76"/>
<rect x="48" y="453" width="63" height="32"/>
<rect x="48" y="533" width="65" height="79"/>
<rect x="48" y="652" width="65" height="84"/>
<rect x="48" y="759" width="65" height="58"/><rect x="48" y="842" width="65" height="17"/>
</g>
<path d="M53 171h9v3h-9zM55 203h11v3H55zM56 220h13v3H56zM54 234h14v2H54zM53 323h7v2h-7zM53 330h8v3h-8zM53 452h6v3h-6z" fill="#000"/>
<!-- mini screenshot in thumb 3 -->
<rect x="48" y="390" width="71" height="62" fill="#c3daf9"/><rect x="48" y="390" width="71" height="3" fill="#1a5ce0"/><rect x="48" y="394" width="71" height="5" fill="#9fbfee"/>
<rect x="49" y="400" width="13" height="37" fill="#919bb0"/><rect x="64" y="400" width="55" height="37" fill="#fff"/>
<rect x="52" y="401" width="9" height="11" fill="#fff" stroke="#e8a040"/><rect x="52" y="414" width="9" height="10" fill="#ddd"/><rect x="52" y="426" width="9" height="10" fill="#ddd"/>
<path d="M69 418l9-9 7 9zM101 418l9-9 7 9M92 407h15" fill="none" stroke="#555"/><circle cx="81" cy="430" r="7" fill="none" stroke="#777"/><path d="M73 422h8l-8 7z" fill="#aaa"/>
<rect x="48" y="437" width="71" height="9" fill="#a8c6f2"/><rect x="48" y="446" width="71" height="2" fill="#e0dccc"/><rect x="48" y="448" width="71" height="4" fill="#2058d8"/><rect x="48" y="448" width="12" height="4" fill="#3a9a3a"/>
<!-- peach pics -->
<path d="M53 513h13v12H53zM53 523h19v12H53z" fill="#e9d4bc"/>
<path d="M56 522l7-7M58 533l7-7 6 7" stroke="#b89c80" fill="none"/>
<rect x="53" y="636" width="12" height="10" fill="#e9d4bc"/>
<g font-size="12"><text x="16" y="199" style="font-size:12px">1</text><text x="16" y="322" style="font-size:12px">2</text><text x="16" y="445" style="font-size:12px">3</text><text x="16" y="568" style="font-size:12px">4</text><text x="16" y="691" style="font-size:12px">5</text><text x="16" y="814" style="font-size:12px">6</text></g>

<!-- rulers main -->
<rect x="158" y="132" width="954" height="22" fill="#d6e6fc"/>
<rect x="158.500" y="154" width="23.500" height="774" fill="#d6e6fc"/>
<rect x="162" y="154" width="15" height="774" fill="#fff"/>
<rect x="182" y="154" width="930" height="774" fill="#929cb2"/>
<rect x="162" y="133" width="16" height="15" fill="#e4eefd" stroke="#5b7cb8"/><path d="M167 136v7h7" fill="none" stroke="#1a2c50" stroke-width="2"/>
<rect x="250" y="135" width="790" height="14" fill="#bdd0f4"/><rect x="362" y="135" width="624" height="14" fill="#fff"/>
<path d="M250 142h790" stroke="#333" stroke-dasharray="1 8.450"/>
<g class="r">
<rect x="245" y="136" width="9" height="12" fill="#bdd0f4"/><rect x="283" y="136" width="9" height="12" fill="#bdd0f4"/><rect x="321" y="136" width="9" height="12" fill="#bdd0f4"/>
<text x="247" y="146" class="r">3</text><text x="285" y="146" class="r">2</text><text x="323" y="146" class="r">1</text>
<text x="398" y="146" class="r" style="paint-order:stroke;stroke:#fff;stroke-width:3px">1</text><text x="435" y="146" class="r" style="paint-order:stroke;stroke:#fff;stroke-width:3px">2</text><text x="473" y="146" class="r" style="paint-order:stroke;stroke:#fff;stroke-width:3px">3</text><text x="511" y="146" class="r" style="paint-order:stroke;stroke:#fff;stroke-width:3px">4</text><text x="549" y="146" class="r" style="paint-order:stroke;stroke:#fff;stroke-width:3px">5</text><text x="587" y="146" class="r" style="paint-order:stroke;stroke:#fff;stroke-width:3px">6</text><text x="625" y="146" class="r" style="paint-order:stroke;stroke:#fff;stroke-width:3px">7</text><text x="663" y="146" class="r" style="paint-order:stroke;stroke:#fff;stroke-width:3px">8</text><text x="700" y="146" class="r" style="paint-order:stroke;stroke:#fff;stroke-width:3px">9</text><text x="735" y="146" class="r" style="paint-order:stroke;stroke:#fff;stroke-width:3px">10</text><text x="773" y="146" class="r" style="paint-order:stroke;stroke:#fff;stroke-width:3px">11</text><text x="811" y="146" class="r" style="paint-order:stroke;stroke:#fff;stroke-width:3px">12</text><text x="849" y="146" class="r" style="paint-order:stroke;stroke:#fff;stroke-width:3px">13</text><text x="887" y="146" class="r" style="paint-order:stroke;stroke:#fff;stroke-width:3px">14</text><text x="924" y="146" class="r" style="paint-order:stroke;stroke:#fff;stroke-width:3px">15</text><text x="961" y="146" class="r" style="paint-order:stroke;stroke:#fff;stroke-width:3px">16</text>
<rect x="995" y="136" width="17" height="12" fill="#bdd0f4"/><text x="1000" y="146" class="r">17</text>
</g>
<path d="M406 133h8v3l-4 4-4-4z" fill="#fff" stroke="#222"/><path d="M359 148l3-4 4 4v6h-7z" fill="#fff" stroke="#222"/><path d="M983 147l4-5 4 5v2h-8z" fill="#fff" stroke="#222"/>
<path d="M170 155v773" stroke="#333" stroke-dasharray="1 8.450"/>
<g class="r">
<text transform="rotate(-90 173 152)" x="173" y="152" class="r" style="paint-order:stroke;stroke:#fff;stroke-width:3px">1</text>
<text transform="rotate(-90 173 189)" x="173" y="189" class="r" style="paint-order:stroke;stroke:#fff;stroke-width:3px">2</text>
<text transform="rotate(-90 173 227)" x="173" y="227" class="r" style="paint-order:stroke;stroke:#fff;stroke-width:3px">3</text>
<text transform="rotate(-90 173 265)" x="173" y="265" class="r" style="paint-order:stroke;stroke:#fff;stroke-width:3px">4</text>
<text transform="rotate(-90 173 303)" x="173" y="303" class="r" style="paint-order:stroke;stroke:#fff;stroke-width:3px">5</text>
<text transform="rotate(-90 173 341)" x="173" y="341" class="r" style="paint-order:stroke;stroke:#fff;stroke-width:3px">6</text>
<text transform="rotate(-90 173 379)" x="173" y="379" class="r" style="paint-order:stroke;stroke:#fff;stroke-width:3px">7</text>
<text transform="rotate(-90 173 417)" x="173" y="417" class="r" style="paint-order:stroke;stroke:#fff;stroke-width:3px">8</text>
<text transform="rotate(-90 173 455)" x="173" y="455" class="r" style="paint-order:stroke;stroke:#fff;stroke-width:3px">9</text>
<text transform="rotate(-90 173 495)" x="173" y="495" class="r" style="paint-order:stroke;stroke:#fff;stroke-width:3px">10</text>
<text transform="rotate(-90 173 533)" x="173" y="533" class="r" style="paint-order:stroke;stroke:#fff;stroke-width:3px">11</text>
<text transform="rotate(-90 173 571)" x="173" y="571" class="r" style="paint-order:stroke;stroke:#fff;stroke-width:3px">12</text>
<text transform="rotate(-90 173 609)" x="173" y="609" class="r" style="paint-order:stroke;stroke:#fff;stroke-width:3px">13</text>
<text transform="rotate(-90 173 647)" x="173" y="647" class="r" style="paint-order:stroke;stroke:#fff;stroke-width:3px">14</text>
<text transform="rotate(-90 173 685)" x="173" y="685" class="r" style="paint-order:stroke;stroke:#fff;stroke-width:3px">15</text>
<text transform="rotate(-90 173 723)" x="173" y="723" class="r" style="paint-order:stroke;stroke:#fff;stroke-width:3px">16</text>
<text transform="rotate(-90 173 761)" x="173" y="761" class="r" style="paint-order:stroke;stroke:#fff;stroke-width:3px">17</text>
<text transform="rotate(-90 173 799)" x="173" y="799" class="r" style="paint-order:stroke;stroke:#fff;stroke-width:3px">18</text>
<text transform="rotate(-90 173 837)" x="173" y="837" class="r" style="paint-order:stroke;stroke:#fff;stroke-width:3px">19</text>
<text transform="rotate(-90 173 874)" x="173" y="874" class="r" style="paint-order:stroke;stroke:#fff;stroke-width:3px">20</text>
<text transform="rotate(-90 173 912)" x="173" y="912" class="r" style="paint-order:stroke;stroke:#fff;stroke-width:3px">21</text>
</g>

<!-- page -->
<rect x="249.500" y="154" width="796" height="774" fill="#fff" stroke="#000"/>
<rect x="1045" y="154" width="2" height="774" fill="#000"/>

<!-- inner screenshot -->
<rect x="364" y="155" width="680" height="553" fill="#c3daf9"/>
<rect x="364" y="154" width="680" height="6" fill="#d4e4fb"/>
<rect x="366" y="160" width="678" height="25" rx="3" fill="url(#tb)"/>
<path d="M369 164v17" stroke="#27415e" stroke-width="2" stroke-dasharray="2 2"/>
<rect x="885.500" y="161.500" width="22" height="22" fill="url(#sel)" stroke="#0a246a"/>
<use href="#new" x="375" y="164"/><use href="#open" x="399" y="164"/><use href="#save" x="422" y="164"/><use href="#perm" x="447" y="164"/><use href="#mail" x="469" y="164"/>
<path d="M491.500 164v17M547.500 164v17M594.500 164v17M693.500 164v17M770.500 164v17M911.500 164v17" stroke="#7c9ccc"/>
<use href="#print" x="496" y="164"/><use href="#prev" x="521" y="164"/><use href="#spell" x="549" y="164"/><use href="#res" x="571" y="164"/>
<g opacity=".4"><use href="#cut" x="601" y="164"/><use href="#copy" x="624" y="164"/><use href="#paste" x="647" y="164"/></g>
<use href="#brush" x="670" y="164"/><use href="#undo" x="699" y="164"/><use href="#arr" x="721" y="171"/><use href="#redo" x="733" y="164"/><use href="#arr" x="755" y="171" opacity=".4"/><use href="#link" x="774" y="164"/><use href="#tbl" x="796" y="164"/><use href="#grid" x="820" y="164"/><use href="#xl" x="842" y="164"/><use href="#cols" x="865" y="164"/><use href="#draw" x="888" y="164"/><use href="#dmap" x="917" y="164"/>
<text x="944" y="178" style="font-family:'Liberation Serif',serif;font-size:16px;font-weight:bold">¶</text>
<rect x="961" y="163" width="56" height="18" fill="#fff"/><rect x="1005" y="163" width="12" height="18" fill="#cfe0f9"/><text x="964" y="176" style="font-size:11px">85%</text><use href="#arr" x="1008" y="171"/><use href="#help" x="1021" y="164"/>

<rect x="366" y="186" width="678" height="25" rx="3" fill="url(#tb)"/>
<path d="M369 190v17" stroke="#27415e" stroke-width="2" stroke-dasharray="2 2"/>
<use href="#sty" x="376" y="190"/>
<rect x="397" y="189" width="97" height="18" fill="#fff"/><rect x="483" y="189" width="11" height="18" fill="#cfe0f9"/><text x="400" y="201" textLength="81">Обычный + 14 г</text><use href="#arr" x="486" y="197"/>
<rect x="497" y="189" width="126" height="18" fill="#fff"/><rect x="611" y="189" width="12" height="18" fill="#cfe0f9"/><text x="500" y="201" textLength="87">Times New Roman</text><use href="#arr" x="615" y="197"/>
<rect x="625" y="189" width="47" height="18" fill="#fff"/><rect x="660" y="189" width="12" height="18" fill="#cfe0f9"/><text x="628" y="201">14</text><use href="#arr" x="663" y="197"/>
<path d="M676.500 190v17M751.500 190v17M883.500 190v17M980.500 190v17" stroke="#7c9ccc"/>
<text x="683" y="202" style="font-family:'Liberation Serif',serif;font-size:14px;font-weight:bold">Ж</text>
<text x="707" y="202" style="font-family:'Liberation Serif',serif;font-size:14px;font-weight:bold;font-style:italic">К</text>
<text x="731" y="202" style="font-family:'Liberation Serif',serif;font-size:14px;font-weight:bold;text-decoration:underline">Ч</text>
<rect x="754.500" y="187.500" width="22" height="22" fill="url(#sel)" stroke="#0a246a"/>
<use href="#al" x="757" y="190"/><use href="#ac" x="780" y="190"/><use href="#ar" x="803" y="190"/><use href="#aj" x="826" y="190"/><use href="#ls" x="852" y="190"/><use href="#arr" x="872" y="197"/><use href="#num" x="889" y="190"/><use href="#bul" x="912" y="190"/><use href="#out" x="935" y="190"/><use href="#ind" x="959" y="190"/><use href="#bord" x="987" y="190"/><use href="#arr" x="1010" y="197"/>
<use href="#hl" x="1021" y="188"/><rect x="1021" y="202" width="16" height="4" fill="#e02020"/>

<rect x="364" y="212" width="134" height="393" fill="#919bb0"/>
<rect x="498" y="212" width="17" height="376" fill="url(#track)"/>
<rect x="515" y="212" width="4.500" height="393" fill="#ece9d8"/>
<rect x="519.500" y="212" width="1.500" height="393" fill="#444"/>
<use href="#uarr" x="499" y="214"/><rect x="500" y="231" width="14" height="62" rx="2" fill="url(#sb)" stroke="#eaf1fe"/><path d="M504 259h6M504 261h6M504 263h6M504 265h6" stroke="#eef3ff"/>
<use href="#darr" x="499" y="587"/>
<!-- inner thumbs -->
<rect x="397" y="216" width="90" height="124" fill="#fab85c"/><path d="M488 219v122H400" stroke="#000" fill="none"/>
<rect x="399.500" y="218.500" width="84" height="119" fill="#fff" stroke="#000"/>
<rect x="399.500" y="342.500" width="84" height="118" fill="#fff" stroke="#000"/><path d="M485 345v118H402" stroke="#000" stroke-width="2" fill="none"/>
<rect x="399.500" y="464.500" width="84" height="118" fill="#fff" stroke="#000"/><path d="M485 467v118H402" stroke="#000" stroke-width="2" fill="none"/>
<g fill="url(#txt)"><rect x="411" y="283" width="67" height="46"/><rect x="411" y="350" width="67" height="58"/><rect x="411" y="418" width="67" height="22"/><rect x="411" y="472" width="67" height="66"/><rect x="416" y="566" width="40" height="5"/></g>
<path d="M416 246l8-12 7 12zM446 247l11-14 6 14zM442 234h12M433 238h12" fill="none" stroke="#888"/><path d="M420 240l10 3M451 240l8 4" stroke="#aaa"/>
<circle cx="430" cy="261" r="9" fill="none" stroke="#999"/><path d="M418 263c0-8 7-12 11-11l-7 11z" fill="#999"/>
<rect x="416" y="409" width="66" height="8" fill="#ecd8c0"/><path d="M416 544h12v8h-12zM416 552h19v13h-19z" fill="#ecd8c0"/>
<g><text x="378" y="282" style="font-size:11px">1</text><text x="378" y="405" style="font-size:11px">2</text><text x="378" y="528" style="font-size:11px">3</text></g>
<!-- inner rulers -->
<rect x="521" y="212" width="523" height="24" fill="#d6e6fc"/>
<rect x="521" y="236" width="24" height="350" fill="#d6e6fc"/><rect x="526" y="236" width="15" height="350" fill="#fff"/>
<rect x="525" y="217" width="16" height="15" fill="#e4eefd" stroke="#5b7cb8"/><path d="M530 220v7h7" fill="none" stroke="#1a2c50" stroke-width="2"/>
<rect x="545" y="219" width="499" height="14" fill="#fff"/>
<path d="M545 225h499" stroke="#333" stroke-dasharray="1 7.100"/>
<g style="paint-order:stroke">
<text x="574" y="228" class="r" style="paint-order:stroke;stroke:#fff;stroke-width:3px">2</text><text x="607" y="228" class="r" style="paint-order:stroke;stroke:#fff;stroke-width:3px">3</text><text x="639" y="228" class="r" style="paint-order:stroke;stroke:#fff;stroke-width:3px">4</text><text x="671" y="228" class="r" style="paint-order:stroke;stroke:#fff;stroke-width:3px">5</text><text x="704" y="228" class="r" style="paint-order:stroke;stroke:#fff;stroke-width:3px">6</text><text x="736" y="228" class="r" style="paint-order:stroke;stroke:#fff;stroke-width:3px">7</text><text x="768" y="228" class="r" style="paint-order:stroke;stroke:#fff;stroke-width:3px">8</text><text x="800" y="228" class="r" style="paint-order:stroke;stroke:#fff;stroke-width:3px">9</text><text x="830" y="228" class="r" style="paint-order:stroke;stroke:#fff;stroke-width:3px">10</text><text x="862" y="228" class="r" style="paint-order:stroke;stroke:#fff;stroke-width:3px">11</text><text x="895" y="228" class="r" style="paint-order:stroke;stroke:#fff;stroke-width:3px">12</text><text x="927" y="228" class="r" style="paint-order:stroke;stroke:#fff;stroke-width:3px">13</text><text x="959" y="228" class="r" style="paint-order:stroke;stroke:#fff;stroke-width:3px">14</text><text x="992" y="228" class="r" style="paint-order:stroke;stroke:#fff;stroke-width:3px">15</text><text x="1024" y="228" class="r" style="paint-order:stroke;stroke:#fff;stroke-width:3px">16</text></g>
<path d="M548 216h8v2l-4 5-4-5z" fill="#fff" stroke="#222"/>
<path d="M533 237v350" stroke="#333" stroke-dasharray="1 7.100"/>
<text transform="rotate(-90 537 269)" x="537" y="269" class="r" style="paint-order:stroke;stroke:#fff;stroke-width:3px">1</text>
<text transform="rotate(-90 537 301)" x="537" y="301" class="r" style="paint-order:stroke;stroke:#fff;stroke-width:3px">2</text>
<text transform="rotate(-90 537 333)" x="537" y="333" class="r" style="paint-order:stroke;stroke:#fff;stroke-width:3px">3</text>
<text transform="rotate(-90 537 365)" x="537" y="365" class="r" style="paint-order:stroke;stroke:#fff;stroke-width:3px">4</text>
<text transform="rotate(-90 537 397)" x="537" y="397" class="r" style="paint-order:stroke;stroke:#fff;stroke-width:3px">5</text>
<text transform="rotate(-90 537 429)" x="537" y="429" class="r" style="paint-order:stroke;stroke:#fff;stroke-width:3px">6</text>
<text transform="rotate(-90 537 463)" x="537" y="463" class="r" style="paint-order:stroke;stroke:#fff;stroke-width:3px">7</text>
<text transform="rotate(-90 537 494)" x="537" y="494" class="r" style="paint-order:stroke;stroke:#fff;stroke-width:3px">8</text>
<text transform="rotate(-90 537 527)" x="537" y="527" class="r" style="paint-order:stroke;stroke:#fff;stroke-width:3px">9</text>
<text transform="rotate(-90 537 560)" x="537" y="560" class="r" style="paint-order:stroke;stroke:#fff;stroke-width:3px">10</text>
<rect x="545" y="236" width="495" height="351" fill="#fff"/>
<rect x="1040" y="236" width="4" height="351" fill="#e8e8e4"/>

<!-- diagrams -->
<g stroke="#111" fill="none" stroke-width="2" stroke-linecap="round">
<path d="M579 388L674 287l4-19M579 388l141-5-46-96-18 91M606 359l114 24"/>
<path d="M590 376c4 3 5 7 5 11" stroke-width="1.300"/>
<path d="M775 281l137-2M779 314h46M884 308l-70 79h34M825 374c3 3 4 8 4 13" stroke-width="2"/>
<path d="M881 386l108-113 4-13M881 386l141 3-33-116-28 98M911 355l111 34M895 371c4 4 5 9 5 15"/>
<path d="M764 392v13" stroke-width="1.600"/>
</g>
<g>
<text x="653" y="287" class="h" style="font-size:21px">C</text><text x="562" y="397" class="h">A</text><text x="730" y="389" class="h">B</text><text x="591" y="355" class="h">D</text><text x="582" y="373" class="h" style="font-size:15px">d</text><text x="597" y="385" class="h">α</text><text x="640" y="400" class="h" style="font-size:19px">a</text><text x="657" y="333" class="h">ℓ</text>
<text x="1001" y="282" class="h" style="font-size:21px">C</text><text x="901" y="350" class="h">D</text><text x="887" y="367" class="h" style="font-size:15px">d</text><text x="899" y="383" class="h">α</text><text x="979" y="338" class="h">ℓ</text><text x="873" y="406" class="h">A</text><text x="949" y="407" class="h" style="font-size:20px">a</text><text x="1027" y="403" class="h">B</text>
<text x="840" y="276" class="h" style="font-size:19px">a</text><text x="800" y="311" class="h" style="font-size:15px">d</text><text x="825" y="385" class="h">α</text>
</g>
<path d="M586 515A56 56 0 0 1 663 455Z" fill="#c9c6cc" stroke="none"/>
<g fill="none" stroke="#222" stroke-width="1.400">
<circle cx="682" cy="517" r="66"/><path d="M586 515A56 56 0 0 1 663 455"/><path d="M663 455A56 56 0 0 1 692 515"/><path d="M586 515h106L663 455 586 515"/><path d="M653 466c2 6 10 6 11-1"/>
</g>
<rect x="637" y="512" width="4" height="4" fill="#000"/>
<text x="656" y="449" class="d">C</text><text x="565" y="527" class="d" style="font-style:italic">A</text><text x="702" y="517" class="d" style="font-style:italic">B</text><text x="639" y="538" class="d" style="font-size:14px;font-style:italic">a</text>

<!-- inner view bar -->
<rect x="521" y="587" width="523" height="17" fill="#ece9d8"/>
<rect x="553.500" y="587.500" width="18" height="16" fill="url(#sel)" stroke="#0a246a"/>
<use href="#vn" x="521" y="587"/><use href="#vw" x="538" y="587"/><use href="#vp" x="555" y="587"/><use href="#vo" x="572" y="587"/><use href="#vr" x="589" y="587"/>
<use href="#larr2" x="607" y="587"/><rect x="623" y="588" width="399" height="15" fill="#fdfdfa"/>
<rect x="706.500" y="588.500" width="273" height="14" rx="2" fill="url(#sbh)" stroke="#eaf1fe"/><path d="M839 592v7M841 592v7M843 592v7M845 592v7" stroke="#eef3ff"/>
<use href="#rarr2" x="1022" y="587"/>

<!-- inner wordart toolbar -->
<rect x="364" y="604" width="680" height="28" fill="#b4cef6"/>
<rect x="366" y="607" width="344" height="25" rx="3" fill="url(#tb)"/><use href="#cv" x="699" y="607"/>
<path d="M370 611v17" stroke="#27415e" stroke-width="2" stroke-dasharray="2 2"/><use href="#wa" x="376" y="611"/><path d="M398.500 611v17M504.500 611v17M602.500 611v17" stroke="#7c9ccc"/>
<text x="404" y="623" style="fill:#8a96aa" textLength="92">Изменить текст...</text>
<g opacity=".4"><use href="#grid" x="510" y="611"/><use href="#brush" x="533" y="611"/></g><use href="#wa" x="556" y="611"/>
<rect x="580" y="612" width="14" height="14" fill="#ddd" stroke="#334"/><path d="M583 615l8 8M591 615l-8 8" stroke="#111" stroke-width="2"/>
<text x="608" y="624" style="font-family:'Liberation Serif',serif;font-size:12px;fill:#889;font-weight:bold">Aa</text><text x="632" y="621" style="font-family:'Liberation Serif',serif;font-size:10px;fill:#889;font-weight:bold">Ab</text>
<use href="#ac" x="654" y="611"/><text x="677" y="621" style="font-family:'Liberation Serif',serif;font-size:11px;font-weight:bold;fill:#223">AV</text><path d="M678 625h15" stroke="#2c5cb0"/>

<!-- inner drawing toolbar -->
<rect x="364" y="632" width="680" height="27" fill="#c3daf9"/>
<rect x="366" y="633" width="628" height="25" rx="3" fill="url(#tb)"/><use href="#cv" x="983" y="633"/>
<path d="M369 637v17" stroke="#27415e" stroke-width="2" stroke-dasharray="2 2"/>
<text x="375" y="649" textLength="54"><tspan text-decoration="underline">Р</tspan>исование</text><use href="#arr" x="432" y="644"/>
<path d="M449 638v13l3-3 2 5 2-1-2-4h4z" fill="#dde4f0" stroke="#556"/><path d="M468.500 637v17M761.500 637v17" stroke="#7c9ccc"/>
<text x="474" y="649" textLength="64">Автофи<tspan text-decoration="underline">г</tspan>уры</text><use href="#arr" x="541" y="644"/>
<use href="#line" x="553" y="638"/><use href="#larr" x="577" y="638"/><use href="#rec" x="600" y="638"/><use href="#ell" x="623" y="638"/><use href="#tx" x="645" y="638"/><use href="#wa" x="669" y="638"/>
<circle cx="699" cy="645" r="6" fill="none" stroke="#5a7ab8" stroke-width="2" stroke-dasharray="2 2"/><use href="#clip" x="715" y="638"/><use href="#pic" x="738" y="638"/>
<use href="#fill" x="768" y="637" fill="#ffff00"/><use href="#arr" x="788" y="644"/><use href="#lc" x="802" y="635"/><rect x="801" y="648" width="16" height="4" fill="#0000e0"/><use href="#arr" x="823" y="644"/>
<use href="#fc" x="835" y="633"/><rect x="835" y="648" width="16" height="4" fill="#000080"/><use href="#arr" x="857" y="644"/>
<use href="#lw" x="869" y="638"/><use href="#das" x="892" y="638"/><use href="#ars" x="915" y="638"/><use href="#sha" x="938" y="638"/><use href="#d3" x="961" y="638"/>

<!-- inner status -->
<rect x="364" y="659" width="680" height="21" fill="#ece9d8"/>
<g fill="none" stroke="#d4d0c0"><rect x="368.500" y="661.500" width="193" height="17"/><rect x="567.500" y="661.500" width="165" height="17"/><rect x="739.500" y="661.500" width="24" height="17"/><rect x="771.500" y="661.500" width="29" height="17"/><rect x="807.500" y="661.500" width="27" height="17"/><rect x="840.500" y="661.500" width="24" height="17"/><rect x="870.500" y="661.500" width="61" height="17"/><rect x="941.500" y="661.500" width="43" height="17"/><rect x="990.500" y="661.500" width="36" height="17"/><rect x="1032.500" y="661.500" width="12" height="17"/></g>
<text x="373" y="674">Стр.  1</text><text x="440" y="674">Разд  1</text><text x="523" y="674">1/18</text><text x="570" y="674">На  2,8см</text><text x="632" y="674">Ст  2</text><text x="676" y="674">Кол  7</text>
<text x="741" y="674" class="g" textLength="21">ЗАП</text><text x="772" y="674" class="g" textLength="27">ИСПР</text><text x="808" y="674" class="g" textLength="25">ВДЛ</text><text x="841" y="674" class="g" textLength="23">ЗАМ</text><text x="871" y="674" textLength="60">русский (Ро</text>
<path d="M953 664h6v10h-6zM959 674h7" fill="none" stroke="#222"/><path d="M961 664l7 11M968 664l-7 11" stroke="#b02020" stroke-width="1.600"/>

<!-- inner taskbar -->
<rect x="364" y="680" width="680" height="28" fill="url(#tbar)"/>
<path d="M364 680h87q6 0 7 8v12q-1 8-7 8h-87z" fill="url(#start)"/>
<use href="#flag" x="373" y="686"/><text x="397" y="700" class="w b" style="font-size:16px;font-style:italic" textLength="37">пуск</text>
<rect x="472" y="688" width="12" height="12" fill="#ddd" stroke="#234"/><path d="M472 694h12M478 688v12" stroke="#555"/>
<path d="M498 688h7v6h-7zM496 694h11v6h-11z" fill="#e8c838" stroke="#333"/>
<path d="M520 700l10-12 2 2-8 12z" fill="#f0b030" stroke="#654"/>
<text x="544" y="693" style="fill:#bcd8ff;font-size:11px;font-weight:bold">»</text>
<rect x="562" y="683" width="143" height="23" rx="2" fill="url(#tbtn)"/><rect x="707" y="683" width="145" height="23" rx="2" fill="url(#tact)"/><rect x="854" y="683" width="145" height="23" rx="2" fill="url(#tbtn)"/>
<rect x="570" y="688" width="14" height="14" fill="#fff" stroke="#c03030"/><path d="M573 691h8v8h-8z" fill="#c84040"/><path d="M574 698l6-6" stroke="#fff"/>
<text x="589" y="698" class="w" textLength="96">Microsoft Office Pi...</text>
<use href="#wd" x="717" y="685"/><text x="736" y="699" class="w" textLength="100">Часть 1. Геометр...</text>
<rect x="761" y="705" width="4" height="3" fill="#f0a020"/>
<path d="M866 688l5 14 4-14z" fill="#f0a030" stroke="#a06020"/><path d="M866 688l1-3M871 688v-4M875 688l1-3" stroke="#c03030"/>
<text x="882" y="698" class="w" textLength="46">90 - Paint</text>
<rect x="1006" y="686" width="14" height="17" fill="#2f6ee0"/><text x="1008" y="698" class="w">RL</text>
<circle cx="1034" cy="694" r="8" fill="#29a3ee" stroke="#fff"/><path d="M1036 690l-4 4 4 4" fill="none" stroke="#fff" stroke-width="2"/>

<!-- body text -->
<text x="410" y="736" class="t b" style="text-decoration:underline" textLength="63">Анализ</text>
<text x="473" y="736" class="t">.</text>
<text x="483" y="736" class="t" textLength="476">Поиск решения задачи проведем, полагая задачу решенной.</text>
<text x="363" y="770" class="t" textLength="47">Пусть</text><text x="415" y="770" class="i" textLength="47">ΔABC</text>
<text x="468" y="770" class="t" textLength="188">- искомый треугольник:</text>
<text x="661" y="770" class="i" textLength="195">AB = a, AC–BC = AD=d,</text>
<text x="865" y="770" class="i" textLength="38">BAD</text><path d="M872 757l8-7 8 7" fill="none" stroke="#555"/>
<text x="907" y="770" class="t">=</text><text x="923" y="770" class="t" textLength="14">α.</text>
<path d="M923 774l2 1 2-1 2 1 2-1 2 1" stroke="#d02020" fill="none"/>
<text x="944" y="770" class="t" textLength="21">За-</text>
<text x="363" y="802" class="t" textLength="95">мечаем, что</text><text x="462" y="802" class="i" textLength="52">ΔABD</text><text x="519" y="802" class="t">=</text>
<path d="M475 808l2 1 2-1 2 1 2-1 2 1 2-1 2 1 2-1 2 1 2-1 2 1 2-1 2 1 2-1 2 1 2-1 2 1 2-1 2 1 2-1 2 1 2-1 2 1 2-1 2 1 2-1" stroke="#20a020" fill="none"/>
<text x="535" y="802" class="t" textLength="390">определен по двум сторонам и углу между ними.</text>
<text x="363" y="867" class="t" textLength="127">Третья вершина</text><text x="496" y="867" class="i">C</text>
<path d="M493 872l2 1 2-1 2 1 2-1 2 1 2-1 2 1 2-1" stroke="#20a020" fill="none"/>
<text x="514" y="867" class="t" textLength="462">искомого треугольника может быть найдена как точка пе-</text>
<text x="363" y="899" class="t" textLength="121">ресечения луча</text><text x="490" y="899" class="i" textLength="25">AD</text>
<text x="520" y="899" class="t" textLength="72">и прямой</text><text x="598" y="899" class="i">l</text>
<text x="609" y="899" class="t" textLength="308">- серединного перпендикуляра отрезка</text>
<text x="923" y="899" class="i" textLength="25">BD</text><text x="948" y="899" class="t" textLength="10">).</text>
<text x="363" y="931" class="t" textLength="454">Иначе говоря план решения найден, отроим треугольник</text><text x="822" y="931" class="i" textLength="50">ΔABD,</text><text x="878" y="931" class="t" textLength="74">а затем и</text>

<!-- main bottom hscroll area -->
<rect x="158" y="928" width="954" height="18" fill="#ece9d8"/>
<rect x="192.500" y="928.500" width="16" height="16" fill="url(#sel)" stroke="#0a246a"/>
<use href="#vn" x="158" y="929"/><use href="#vw" x="175" y="929"/><use href="#vp" x="192" y="929"/><use href="#vo" x="209" y="929"/><use href="#vr" x="226" y="929"/>
<use href="#larr2" x="244" y="929"/>
<rect x="260.500" y="929.500" width="833" height="14" rx="2" fill="url(#sbh)" stroke="#eaf1fe"/><path d="M673 933v7M675 933v7M677 933v7M679 933v7" stroke="#eef3ff"/>
<use href="#rarr2" x="1095" y="929"/>

<!-- main vertical scrollbar -->
<rect x="1112" y="130" width="18" height="750" fill="url(#track)"/>
<use href="#uarr" x="1113" y="132"/>
<rect x="1113.500" y="284.500" width="14" height="43" rx="2" fill="url(#sb)" stroke="#eaf1fe"/><path d="M1117 303h7M1117 305h7M1117 307h7M1117 309h7" stroke="#eef3ff"/>
<use href="#darr" x="1113" y="861"/>
<rect x="1112" y="877" width="18" height="69" fill="#ece9d8"/>
<path d="M1119.500 883l-3.500 3.500h7zM1116 888h7" fill="#111" stroke="#111"/>
<circle cx="1119.500" cy="902" r="3.200" fill="#aaa" stroke="#333"/>
<path d="M1119.500 923l-3.500-3.500h7zM1116 917h7" fill="#111" stroke="#111"/>

<!-- task pane -->
<rect x="1130" y="130" width="3" height="816" fill="#fff"/>
<rect x="1133" y="130" width="147" height="815" fill="#d6e6fc"/>
<rect x="1134" y="130" width="146" height="26" fill="url(#pane)"/>
<path d="M1137 135v15" stroke="#27415e" stroke-width="2" stroke-dasharray="2 2"/>
<text x="1143" y="148" class="b" style="font-size:12px" textLength="98">Буфер обмена (2</text>
<path d="M1247 141h9l-4.500 5z" fill="#111"/><path d="M1265 141l7 7M1272 141l-7 7" stroke="#111" stroke-width="1.500"/>
<path d="M1134 156h87v12q0 6-6 6h-81z" fill="#4f80d2"/>
<circle cx="1148" cy="165" r="6" fill="#a4b8dc" stroke="#d0dcf0"/><path d="M1152 165h-7M1148 162l-3 3 3 3" stroke="#e8eefa" fill="none"/>
<circle cx="1177" cy="165" r="6" fill="#a4b8dc" stroke="#d0dcf0"/><path d="M1173 165h7M1177 162l3 3-3 3" stroke="#e8eefa" fill="none"/>
<path d="M1162.500 158v14M1191.500 158v14" stroke="#c8d8f4"/>
<path d="M1199 166l7-7 7 7v6h-14z" fill="#f8e8b0" stroke="#80501c"/><path d="M1198 166l8-8 8 8" fill="none" stroke="#c04020" stroke-width="1.600"/>
<rect x="1141.500" y="183.500" width="95" height="19" rx="3" fill="url(#btn)" stroke="#14355f"/>
<rect x="1141.500" y="208.500" width="95" height="19" rx="3" fill="url(#btn)" stroke="#14355f"/>
<use href="#paste" x="1144" y="185"/><text x="1161" y="197" textLength="67">Вставить все</text>
<use href="#paste" x="1144" y="210"/><path d="M1150 213l8 11M1158 213l-8 11" stroke="#111" stroke-width="1.500"/><text x="1161" y="222" textLength="70">Очистить все</text>
<text x="1139" y="243" textLength="121">Выберите вставляемый</text><text x="1139" y="256" textLength="40">объект:</text>
<rect x="1140.500" y="261.500" width="130" height="640" fill="#fff" stroke="#7e9dbd"/>
<rect x="1253" y="262" width="17" height="639" fill="#fafaf6"/>
<rect x="1254.500" y="265.500" width="14" height="14" rx="2" fill="#eeeee4" stroke="#e0e0d4"/><path d="M1257 275l4.500-4 4.500 4" fill="none" stroke="#b8b8a8" stroke-width="2"/>
<rect x="1254.500" y="885.500" width="14" height="14" rx="2" fill="#eeeee4" stroke="#e0e0d4"/><path d="M1257 890l4.500 4 4.500-4" fill="none" stroke="#b8b8a8" stroke-width="2"/>
<rect x="1144" y="265" width="106" height="54" fill="#fff" stroke="#316ac5" stroke-width="2"/>
<use href="#wd" x="1146" y="266"/><path d="M1171 272l-3 6h6z" fill="none" stroke="#111"/>
<use href="#wd" x="1146" y="325"/>
<rect x="1187.500" y="344.500" width="19" height="11" fill="#fff" stroke="#a09c8c"/><path d="M1188 355l9-10 9 10" fill="none" stroke="#888"/>
<rect x="1141.500" y="915.500" width="79" height="20" rx="3" fill="url(#btn)" stroke="#14355f"/><text x="1145" y="930" textLength="57">Параметры</text><path d="M1207 924h8l-4 4z" fill="#111"/>

<!-- bottom drawing toolbar -->
<rect x="0" y="946" width="1280" height="29" fill="#c3daf9"/>
<rect x="3" y="948" width="605" height="25" rx="3" fill="url(#tb)"/><use href="#cv" x="597" y="948"/>
<path d="M7 952v17" stroke="#27415e" stroke-width="2" stroke-dasharray="2 2"/>
<text x="12" y="964" textLength="54"><tspan text-decoration="underline">Р</tspan>исование</text><use href="#arr" x="69" y="958"/>
<path d="M85 953v13l3-3 2 5 2-1-2-4h4z" fill="#dde4f0" stroke="#556"/><path d="M105.500 952v17M374.500 952v17" stroke="#7c9ccc"/>
<text x="111" y="964" textLength="64">Автофи<tspan text-decoration="underline">г</tspan>уры</text><use href="#arr" x="178" y="958"/>
<use href="#line" x="190" y="952"/><use href="#larr" x="214" y="952"/><use href="#rec" x="237" y="952"/><use href="#ell" x="260" y="952"/><use href="#tx" x="282" y="952"/><use href="#wa" x="305" y="952"/><use href="#clip" x="329" y="952"/><use href="#pic" x="352" y="952"/>
<use href="#fill" x="381" y="950" fill="#ffff00"/><use href="#arr" x="403" y="958"/><use href="#lc" x="415" y="949"/><rect x="415" y="963" width="16" height="4" fill="#0000e0"/><use href="#arr" x="438" y="958"/>
<use href="#fc" x="449" y="948"/><rect x="449" y="963" width="16" height="4" fill="#00ffff"/><use href="#arr" x="471" y="958"/>
<use href="#lw" x="483" y="952"/><use href="#das" x="505" y="952"/><use href="#ars" x="529" y="952"/><use href="#sha" x="551" y="952"/><use href="#d3" x="575" y="952"/>

<!-- bottom status -->
<rect x="0" y="973" width="1280" height="22" fill="#ece9d8"/><path d="M0 973.500h1280" stroke="#a8a496"/>
<g fill="none" stroke="#d4d0c0"><rect x="5.500" y="977.500" width="192" height="16"/><rect x="204.500" y="977.500" width="165" height="16"/><rect x="376.500" y="977.500" width="25" height="16"/><rect x="407.500" y="977.500" width="31" height="16"/><rect x="444.500" y="977.500" width="26" height="16"/><rect x="476.500" y="977.500" width="24" height="16"/><rect x="507.500" y="977.500" width="64" height="16"/><rect x="578.500" y="977.500" width="42" height="16"/><rect x="627.500" y="977.500" width="35" height="16"/><rect x="668.500" y="977.500" width="26" height="16"/><rect x="700.500" y="977.500" width="28" height="16"/></g>
<text x="11" y="989">Стр.  3</text><text x="77" y="989">Разд  1</text><text x="160" y="989">3/11</text><text x="207" y="989">На  2см</text><text x="268" y="989">Ст  1</text><text x="313" y="989">Кол  1</text>
<text x="378" y="989" class="g" textLength="22">ЗАП</text><text x="409" y="989" class="g" textLength="28">ИСПР</text><text x="446" y="989" class="g" textLength="24">ВДЛ</text><text x="477" y="989" class="g" textLength="23">ЗАМ</text><text x="508" y="989" textLength="60">русский (Ро</text>
<path d="M590 979h6v10h-6zM596 989h7" fill="none" stroke="#222"/><path d="M598 979l7 11M605 979l-7 11" stroke="#b02020" stroke-width="1.600"/>

<!-- taskbar -->
<rect x="0" y="995" width="1280" height="29" fill="url(#tbar)"/>
<path d="M0 995h88q6 0 7 8v13q-1 8-7 8H0z" fill="url(#start)"/>
<use href="#flag" x="9" y="1000"/><text x="34" y="1015" class="w b" style="font-size:17px;font-style:italic" textLength="37">пуск</text>
<circle cx="116" cy="1009" r="7" fill="#e88a20" stroke="#444"/><text x="112" y="1013" style="font-size:10px;font-weight:bold;fill:#222">A</text>
<rect x="133" y="1002" width="11" height="14" fill="#eef" stroke="#246"/><path d="M136 1012l8-8" stroke="#2c74d8" stroke-width="2"/>
<rect x="156" y="1002" width="9" height="11" fill="#d02020"/><rect x="162" y="1002" width="5" height="14" fill="#222"/>
<text x="181" y="1006" style="fill:#bcd8ff;font-size:11px;font-weight:bold">»</text>
<rect x="198" y="998" width="158" height="24" rx="2" fill="url(#tbtn)"/><rect x="358" y="998" width="159" height="24" rx="2" fill="url(#tact)"/><rect x="518" y="998" width="158" height="24" rx="2" fill="url(#tbtn)"/>
<rect x="208" y="1003" width="13" height="13" fill="#fff" stroke="#c00" stroke-width="1.500"/><text x="210.500" y="1014" style="font-size:11px;font-weight:bold;fill:#d00000">A</text>
<text x="226" y="1013" class="w" textLength="115">astalaViSta money sa...</text>
<use href="#wd" x="368" y="1001"/><text x="388" y="1013" class="w" textLength="112">Часть 2. Методика ...</text>
<ellipse cx="537" cy="1009" rx="6" ry="7" fill="none" stroke="#d02020" stroke-width="3"/>
<text x="547" y="1013" class="w" textLength="113">семья как социальн...</text>
<rect x="1107" y="1000" width="20" height="19" fill="#2f6ee0"/><text x="1108" y="1014" class="w" textLength="13">EN</text>
<path d="M1133 995h147v29h-147z" fill="url(#tray)"/>
<circle cx="1133" cy="1009" r="9" fill="#3aa0ee" stroke="#cfe6ff" stroke-width="1.500"/><path d="M1135 1005l-4 4 4 4" fill="none" stroke="#fff" stroke-width="2"/>
<rect x="1145" y="1002" width="10" height="13" fill="#ecd080" stroke="#664"/><rect x="1150" y="1009" width="7" height="7" fill="#e8e8a0" stroke="#333"/>
<rect x="1163" y="1002" width="9" height="9" fill="#445090" stroke="#eef"/><rect x="1159" y="1007" width="8" height="8" fill="#6a78b8" stroke="#eef"/>
<path d="M1181 1001h12l-4 8 4 8h-5l-3-6-4 6z" fill="#e01818" stroke="#fff"/>
<rect x="1199" y="1002" width="13" height="14" fill="#e88418"/><path d="M1203 1005l6 4-6 4z" fill="#222"/>
<ellipse cx="1223" cy="1009" rx="4" ry="7" fill="#777" stroke="#eee"/><path d="M1221 1006l4 6-2 2v-10l2 2-4 5" stroke="#fff" fill="none"/>
<text x="1239" y="1013" class="w" textLength="28">11:46</text>
</svg>
</body></html>
